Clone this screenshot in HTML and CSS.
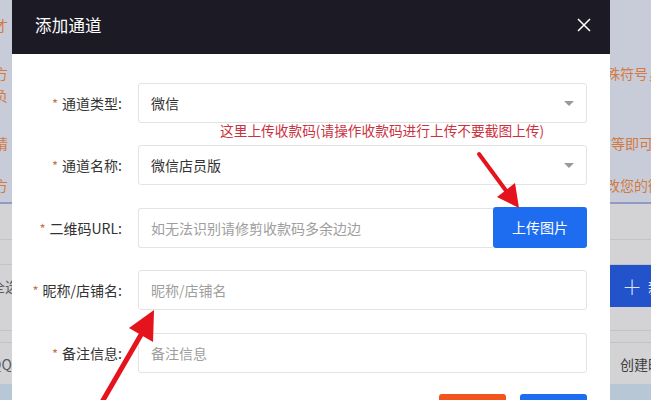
FILE: index.html
```html
<!DOCTYPE html>
<html lang="zh-CN">
<head>
<meta charset="utf-8">
<title>添加通道</title>
<link rel="stylesheet" href="styles.css">
</head>
<body>
<div class="backdrop">
  <div class="notice">
    <div class="nline l1"><span class="nl">才</span><span class="nr"></span></div>
    <div class="nline l2"><span class="nl">方</span><span class="nr">殊符号，</span></div>
    <div class="nline l3"><span class="nl">负</span><span class="nr"></span></div>
    <div class="nline l4"><span class="nl">请</span><span class="nr n4">等即可</span></div>
    <div class="nline l5"><span class="nl">方</span><span class="nr">改您的微信</span></div>
  </div>
  <div class="table">
    <div class="trow r1"></div>
    <div class="trow r2"></div>
    <div class="trow r3"><span class="tl">全选</span><span class="tr"><span class="addbtn"><span class="plus">＋</span>新增</span></span></div>
    <div class="trow r4"></div>
    <div class="trow r5"></div>
    <div class="trow r6"><span class="tl">QQ</span><span class="tr">创建时间</span></div>
    <div class="tfoot"></div>
  </div>
</div>

<div class="modal">
  <div class="modal-head">
    <span class="modal-title">添加通道</span>
    <svg class="close" width="14" height="14" viewBox="0 0 14 14"><path d="M1 1 L13 13 M13 1 L1 13" stroke="#fff" stroke-width="1.5" fill="none"/></svg>
  </div>
  <div class="modal-body">
    <div class="form">
      <div class="frow">
        <label class="flabel"><i>*</i>通道类型:</label>
        <div class="field select"><span class="val">微信</span><span class="caret"></span></div>
      </div>
      <div class="frow">
        <label class="flabel"><i>*</i>通道名称:</label>
        <div class="field select"><span class="val">微信店员版</span><span class="caret"></span></div>
      </div>
      <div class="frow">
        <label class="flabel"><i>*</i>二维码URL:</label>
        <div class="group">
          <div class="field grow"><span class="ph">如无法识别请修剪收款码多余边边</span></div>
          <button class="upload">上传图片</button>
        </div>
      </div>
      <div class="frow">
        <label class="flabel"><i>*</i>昵称/店铺名:</label>
        <div class="field"><span class="ph">昵称/店铺名</span></div>
      </div>
      <div class="frow">
        <label class="flabel"><i>*</i>备注信息:</label>
        <div class="field"><span class="ph">备注信息</span></div>
      </div>
    </div>
    <div class="footer">
      <button class="btn cancel">取消</button>
      <button class="btn ok">确定</button>
    </div>
  </div>
</div>

<div class="tip">这里上传收款码(请操作收款码进行上传不要截图上传)</div>

<svg class="arrows" width="651" height="400" viewBox="0 0 651 400">
  <line x1="479" y1="154" x2="507" y2="192" stroke="#e5131b" stroke-width="4" stroke-linecap="round"/>
  <polygon points="519,208 497,197 515,183" fill="#e5131b"/>
  <line x1="102" y1="402" x2="142" y2="333" stroke="#e5131b" stroke-width="5" stroke-linecap="round"/>
  <polygon points="154,310 153,342 129,328" fill="#e5131b"/>
</svg>
</body>
</html>
```

FILE: styles.css
```css
* { box-sizing: border-box; }
html, body {
  margin: 0;
  padding: 0;
  width: 651px;
  height: 400px;
  overflow: hidden;
}
body {
  position: relative;
  font-family: "Noto Sans CJK SC", "Noto Sans", sans-serif;
  background: #c9cdd9;
}

/* ---------- backdrop (dimmed page) ---------- */
.backdrop {
  width: 651px;
  height: 400px;
  display: flex;
  flex-direction: column;
}
.notice {
  height: 204px;
  background: #c8ccd9;
  color: #d27a42;
  font-size: 14px;
  line-height: 22px;
  padding-top: 14px;
  border-bottom: 2px solid #8f9bc5;
}
.nline {
  display: grid;
  grid-template-columns: 606px 1fr;
  white-space: nowrap;
  overflow: hidden;
  height: 22px;
}
.nl { margin-left: -6px; }
.nr { overflow: hidden; }
.n4 { padding-left: 5px; }
.l2 { margin-top: 26px; }
.l3 { margin-top: 0; }
.l4 { margin-top: 26px; }
.l5 { margin-top: 20px; }

.table {
  flex: 1;
  display: flex;
  flex-direction: column;
  background: #d3d3d6;
  font-size: 14px;
  color: #3d3d40;
}
.trow {
  display: grid;
  grid-template-columns: 610px 1fr;
  align-items: center;
  border-bottom: 1px solid #c3c3c7;
  white-space: nowrap;
  overflow: hidden;
}
.r1 { height: 36px; }
.r2 { height: 25px; }
.r3 { height: 42px; border-bottom: none; }
.r4 { height: 24px; }
.r5 { height: 12px; }
.r6 { height: 41px; border-bottom: none; }
.tl { margin-left: -9px; color: #5a5a5e; }
.tr { padding-left: 10px; }
.r3 .tr { padding-left: 0; align-self: stretch; display: flex; }
.addbtn {
  background: #2253cb;
  color: #dfe6f7;
  display: flex;
  align-items: center;
  padding-left: 12px;
  width: 60px;
  font-size: 15px;
}
.plus { font-size: 20px; margin-right: 6px; font-weight: 300; }
.tfoot {
  flex: 1;
  background: #b8c7d5;
}

/* ---------- modal ---------- */
.modal {
  position: absolute;
  left: 12px;
  top: 0;
  width: 598px;
  height: 440px;
  background: #fff;
}
.modal-head {
  height: 54px;
  background: #1c1b25;
  display: flex;
  align-items: center;
  justify-content: space-between;
  padding: 0 19px 4px 23px;
}
.modal-title {
  color: #fff;
  font-size: 16.5px;
  letter-spacing: 0.2px;
}
.close { display: block; }

.modal-body {
  padding: 29px 23px 0 0;
}
.form {
  display: flex;
  flex-direction: column;
  gap: 22.4px;
}
.frow {
  display: grid;
  grid-template-columns: 110px 1fr;
  column-gap: 16px;
  align-items: center;
}
.flabel {
  text-align: right;
  font-size: 14px;
  color: #333;
  white-space: nowrap;
}
.flabel i {
  font-style: normal;
  color: #c8734a;
  margin-right: 4px;
  font-size: 13px;
}
.field {
  height: 40px;
  border: 1px solid #e3e3e3;
  border-radius: 3px;
  display: flex;
  align-items: center;
  padding: 0 12px;
  font-size: 14px;
  color: #333;
}
.select { justify-content: space-between; padding-right: 12px; }
.caret {
  width: 0;
  height: 0;
  border-left: 5px solid transparent;
  border-right: 5px solid transparent;
  border-top: 5px solid #9a9a9a;
}
.ph { color: #9e9e9e; }
.group { display: flex; }
.grow { flex: 1; border-right: none; border-radius: 3px 0 0 3px; }
.upload {
  width: 94px;
  height: 41px;
  margin-top: -1px;
  border: none;
  border-radius: 3px;
  background: #1e6cf0;
  color: #fff;
  font-family: inherit;
  font-size: 14px;
  padding: 0;
}

.footer {
  display: flex;
  justify-content: flex-end;
  gap: 14px;
  margin-top: 21px;
}
.btn {
  width: 67px;
  height: 36px;
  border: none;
  border-radius: 3px;
  color: #fff;
  font-family: inherit;
  font-size: 14px;
}
.cancel { background: #f2541c; }
.ok { background: #1e6cf0; }

/* ---------- annotations ---------- */
.tip {
  position: absolute;
  left: 220px;
  top: 120px;
  font-size: 13.7px;
  line-height: 20px;
  color: #cc3140;
  white-space: nowrap;
}
.arrows {
  position: absolute;
  left: 0;
  top: 0;
  pointer-events: none;
}
```
